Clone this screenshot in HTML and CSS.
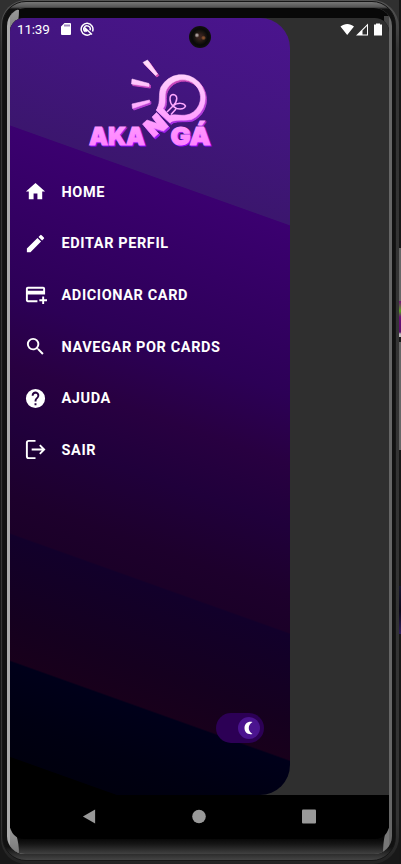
FILE: index.html
```html
<!DOCTYPE html>
<html lang="pt-BR">
<head>
<meta charset="utf-8">
<title>Akangá</title>
<link rel="stylesheet" href="styles.css">
</head>
<body>
<div class="desktop">
  <div class="edge"></div>
  <div class="phone"><div class="bezel"><div class="rail"><div class="inner">
    <i class="glint tl"></i><i class="glint tr"></i><i class="glint bl"></i><i class="glint br"></i>
    <div class="screen">
      <main class="app">
        <nav class="drawer">
          <svg class="logo" viewBox="80 50 140 105" role="img" aria-label="Akangá">
            <defs>
              <linearGradient id="pink" gradientUnits="userSpaceOnUse" x1="0" y1="60" x2="0" y2="148"><stop offset="0" stop-color="#ffe0fa"/><stop offset=".55" stop-color="#ffabff"/><stop offset="1" stop-color="#ff80ff"/></linearGradient>
              <linearGradient id="shade" gradientUnits="userSpaceOnUse" x1="0" y1="60" x2="0" y2="148"><stop offset="0" stop-color="#d94ea6"/><stop offset=".6" stop-color="#b23edb"/><stop offset="1" stop-color="#8a00ff"/></linearGradient>
              <g id="mark">
                <path d="M143 62.500l4.500-2.500 10 14-2 1.500zM132 79l17 4.500v3l-17.500-2.500zM132 104l17.500-4 0 2.500-17 6z"/>
                <path fill-rule="evenodd" d="M171 121.500C178 119 185 121 191.500 119.500A23.500 23.500 0 1 0 161 87C158 94 161 102 157 108.500zM169.500 115.500L163 108.500C167 103 163.500 96 166.500 89.500A18 18 0 1 1 190 114C182 117 176 113.500 169.500 115.500z"/>
                <path d="M156 110l3-3 14 13-3 3z"/>
                <text class="word" x="89" y="144.500" textLength="56" lengthAdjust="spacingAndGlyphs">AKA</text>
                <text class="word" x="170.500" y="144.500" textLength="40" lengthAdjust="spacingAndGlyphs">GÁ</text>
                <path d="M142.500 124l4.500-4 10 3.500-5-6.500 4.500-4.500 12 14-5 4.500-10-3 5 5.500-4.500 4z"/>
              </g>
            </defs>
            <use href="#mark" fill="url(#shade)" stroke="url(#shade)" transform="translate(1.300 1.500)"/>
            <use href="#mark" fill="url(#pink)" stroke="url(#pink)" stroke-width=".6"/>
            <path class="filament" d="M167 112L173 106C169 102 169 95 173 94.500C178 95 178 101 173 106C178 102 184 103 185.500 106C184 110 177 110 173 106M171 114.500L176 109"/>
          </svg>
          <ul class="menu">
            <li class="item"><svg class="icon" viewBox="0 0 24 24"><path d="M10 20v-6h4v6h5v-8h3L12 3 2 12h3v8z"/></svg><span>HOME</span></li>
            <li class="item"><svg class="icon" viewBox="0 0 24 24"><path d="M3 17.250V21h3.750L17.810 9.940l-3.750-3.750L3 17.250zM20.710 7.040a1 1 0 0 0 0-1.410l-2.340-2.340a1 1 0 0 0-1.410 0l-1.830 1.830 3.750 3.750 1.830-1.830z"/></svg><span>EDITAR PERFIL</span></li>
            <li class="item"><svg class="icon" viewBox="0 0 24 24"><path d="M20 4H4c-1.110 0-2 .890-2 2v12c0 1.110.890 2 2 2h10v-2H4v-6h18V6c0-1.110-.890-2-2-2zm0 4H4V6h16v2zm4 9v2h-3v3h-2v-3h-3v-2h3v-3h2v3z"/></svg><span>ADICIONAR CARD</span></li>
            <li class="item"><svg class="icon" viewBox="0 0 24 24"><path d="M15.500 14h-.790l-.280-.270A6.470 6.470 0 0 0 16 9.500 6.500 6.500 0 1 0 9.500 16c1.610 0 3.090-.590 4.230-1.570l.270.280v.790l5 4.990L20.490 19zM9.500 14a4.500 4.500 0 1 1 0-9 4.500 4.500 0 0 1 0 9z"/></svg><span>NAVEGAR POR CARDS</span></li>
            <li class="item"><svg class="icon" viewBox="0 0 24 24"><path d="M12 2a10 10 0 1 0 0 20 10 10 0 0 0 0-20zm1 17h-2v-2h2zm2.070-7.750-.900.920C13.450 12.900 13 13.500 13 15h-2v-.500c0-1.100.450-2.100 1.170-2.830l1.240-1.260A2 2 0 1 0 10 9H8a4 4 0 1 1 7.070 2.250z"/></svg><span>AJUDA</span></li>
            <li class="item"><svg class="icon exit" viewBox="0 0 24 24"><path d="M12 3H5q-2 0-2 2v14q0 2 2 2h7M8 12h12.500M16.500 7.500l4.500 4.500-4.500 4.500"/></svg><span>SAIR</span></li>
          </ul>
          <div class="switch"><div class="knob"><svg viewBox="0 0 12 14"><path d="M9.500 1C4.500 0 1.500 3 1.500 7s3 7 8 6C4.500 10 4.500 4 9.500 1z"/></svg></div></div>
        </nav>
      </main>
      <div class="softkeys">
        <svg viewBox="0 0 14 16"><path d="M13.500 .5v15L.5 8z"/></svg>
        <svg viewBox="0 0 14 14"><circle cx="7" cy="7" r="6.800"/></svg>
        <svg viewBox="0 0 14 14"><rect width="14" height="14" rx="1"/></svg>
      </div>
      <header class="status">
        <span class="time">11:39</span>
        <svg class="sd" viewBox="0 0 10 12"><path fill-rule="evenodd" d="M3.500 0H9q1 0 1 1v10q0 1-1 1H1q-1 0-1-1V3.500zM3.500 1.500v2h1v-2zm2 0v2h1v-2zm2 0v2h1v-2z"/></svg>
        <svg class="disc" viewBox="0 0 14 14"><path d="M10.500 12A5.900 5.900 0 1 1 12.500 9.500M5.500 9.800A3.200 3.200 0 1 1 10 8.200M4.500 5.500L12 12.500M4.500 7.500l2.500 2"/></svg>
        <svg class="signals" viewBox="0 0 42 13"><path d="M.5 3.500C4.500 0 10 0 14 3.500L7.200 12zM34 1.500h2V.5h4v1h2V12.500h-8z"/><path fill-rule="evenodd" d="M16 12.500L28 .5V12.500zM22.500 11.500h4.500V3l-4.500 4.500z"/></svg>
        <div class="camera"></div>
      </header>
    </div>
  </div></div></div></div>
  <div class="behind"><i class="pane"></i><i class="art"></i><i class="sheet"></i><i class="glow"></i></div>
</div>
</body>
</html>
```
FILE: styles.css
```css
* { box-sizing: border-box; }
body { margin: 0; background: #1b1b1b; font-family: Roboto, sans-serif; }
.desktop { display: flex; width: 401px; height: 864px; overflow: hidden; background: linear-gradient(#303030 0 30px, #181818 120px); }
.edge { width: 1px; }
.phone { width: 398px; height: 864px; padding: 1px 3px 3px 1px; border-radius: 25px 27px 27px 25px; background: linear-gradient(#555, #343434 50px, #333 820px, #222); }
.bezel { height: 100%; padding: 6px 3px 6px 4px; border-radius: 24px; background: linear-gradient(#777, #555 5px, #111 7px, #111 845px, #444); border: 1px solid #161616; }
.rail { height: 100%; padding: 0 3px; border-radius: 18px; background: linear-gradient(90deg, #aaa 0 20px, #111 20px 365px, #666 365px); overflow: hidden; }
.inner { position: relative; height: 100%; padding-top: 10px; background: linear-gradient(#080808 0 831px, #151515 836px, #454545 847px); }
.glint { position: absolute; width: 9px; height: 26px; background: linear-gradient(#999, #777); }
.tl { left: 0; top: 2px; border-radius: 0 0 100% 0; }
.tr { right: 0; top: 8px; width: 5px; background: #444; border-radius: 0 0 0 100%; }
.bl { left: 0; bottom: 0; border-radius: 0 100% 0 0; }
.br { right: 0; bottom: 0; width: 6px; background: #777; border-radius: 100% 0 0 0; }
.screen { position: relative; height: 821px; border-radius: 14px; overflow: hidden; background: #000; display: flex; flex-direction: column; }
.app { height: 777px; background: #2f2f2f; }
.drawer { width: 280px; height: 777px; padding-top: 32px; border-radius: 0 30px 30px 0; background: linear-gradient(199.65deg, #4b148f 0, #431580 12%, #3b166e 23.600%, #3b0070 23.700%, #2c0056 43%, #280041 51%, #20003b 58%, #1d002c 66%, #1b0028 70.100%, #12002b 70.300%, #15001f 80%, #18001b 84.600%, #00001a 84.800%, #000012 91%, #00000e 95.600%, #000 95.700%); display: flex; flex-direction: column; }
.logo { width: 140px; height: 105px; margin-left: 70px; flex: none; }
.word { font: 900 25px Inter, sans-serif; stroke-width: 1; }
.filament { fill: none; stroke: #ffa8ff; stroke-width: 1.500; }
.menu { list-style: none; margin: 11px 0 0; padding: 0; }
.item { height: 51.600px; padding-left: 14px; display: flex; align-items: center; color: #fff; font-size: 14.500px; font-weight: 700; letter-spacing: .61px; }
.item span { padding-top: 1.200px; }
.icon { width: 23px; height: 23px; margin-right: 14.500px; fill: #fff; }
.exit { fill: none; stroke: #fff; stroke-width: 2; }
.switch { width: 48px; height: 30px; margin: auto 26px 52px auto; padding: 4px; border-radius: 15px; background: #2c0055; }
.knob { width: 22px; height: 22px; margin-left: auto; border-radius: 50%; background: #4b148f; display: grid; place-items: center; }
.knob svg { width: 12px; height: 14px; fill: #fff; }
.softkeys { height: 43px; padding: 0 73.500px 0 71.500px; display: flex; align-items: center; justify-content: space-between; }
.softkeys svg { height: 15px; width: 14px; fill: #999; }
.softkeys svg:nth-child(2) { margin-left: 1.500px; }
.status { position: absolute; inset: 0 0 auto; height: 22px; padding: 0 7px; display: flex; align-items: center; color: #fff; }
.status svg { fill: #fff; }
.time { width: 44px; font-size: 13.500px; letter-spacing: -.2px; }
.sd { width: 10px; height: 12px; }
.status .disc { width: 14px; height: 14px; margin-left: 8.500px; fill: none; stroke: #fff; stroke-width: 1.500; }
.signals { width: 42px; height: 13px; margin-left: auto; }
.camera { position: absolute; left: 179px; top: 8px; width: 22px; height: 22px; border-radius: 50%; background: radial-gradient(circle at 36% 42%, #a99c99 0 .8px, transparent 2.500px), radial-gradient(circle at 66% 54%, #87502d 0 .8px, transparent 2.500px), radial-gradient(circle, #38231f 0 2px, #17130f 6px, #090909 8px, #11100f 11px); }
.behind { width: 2px; height: 864px; display: flex; flex-direction: column; background: #171717; }
.pane { height: 53px; margin-top: 248px; background: #666; }
.art { height: 36px; background: linear-gradient(#73107a, #55a51c 10px, #681078 16px, #59106a 31px, #bbb 33px); }
.sheet { height: 108px; margin-top: 5px; background: #666; }
.glow { height: 48px; margin-top: 136px; background: linear-gradient(#171730, #0a0718 25px, #302060); }
```
